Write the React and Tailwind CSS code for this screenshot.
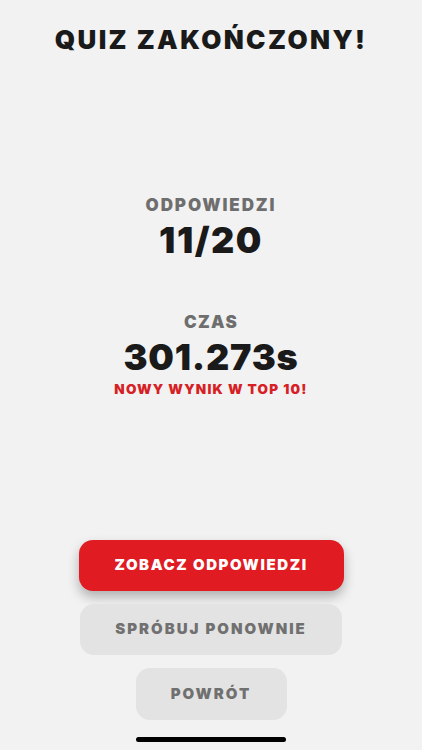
import React from "react";

export default function App() {
  const font = { fontFamily: "Inter, 'Liberation Sans', sans-serif" };
  return (
    <div
      className="w-[422px] h-[750px] bg-[#f2f2f2] flex flex-col items-center overflow-hidden"
      style={font}
    >
      <h1 className="mt-[22px] text-[26px] leading-[36px] font-black tracking-[2.4px] text-[#1a1a1a]">
        QUIZ ZAKOŃCZONY!
      </h1>

      <div className="mt-[136px] flex flex-col items-center">
        <div className="text-[17px] leading-[22px] font-black text-[#6e6e6e] tracking-[1.9px]">
          ODPOWIEDZI
        </div>
        <div className="mt-[3px] text-[36px] leading-[42px] font-black tracking-[1.5px] text-[#1a1a1a]">
          11/20
        </div>
      </div>

      <div className="mt-[50px] flex flex-col items-center">
        <div className="text-[17px] leading-[22px] font-black text-[#6e6e6e] tracking-[1.3px]">
          CZAS
        </div>
        <div className="mt-[3px] text-[36px] leading-[42px] font-black tracking-[0.8px] text-[#1a1a1a]">
          301.273s
        </div>
        <div className="mt-[2px] text-[13.5px] leading-[19px] font-black text-[#d71f26] tracking-[1.2px]">
          NOWY WYNIK W TOP 10!
        </div>
      </div>

      <div className="mt-auto flex flex-col items-center gap-[13px]">
        <button className="w-[265px] h-[51px] rounded-[14px] bg-[#e01b22] text-white text-[15px] font-black tracking-[1.6px] shadow-[0_6px_12px_rgba(0,0,0,0.28)]">
          ZOBACZ ODPOWIEDZI
        </button>
        <button className="w-[262px] h-[51px] rounded-[14px] bg-[#e3e3e3] text-[#707070] text-[15px] font-black tracking-[2px]">
          SPRÓBUJ PONOWNIE
        </button>
        <button className="w-[151px] h-[52px] rounded-[14px] bg-[#e3e3e3] text-[#707070] text-[15px] font-black tracking-[2px]">
          POWRÓT
        </button>
      </div>

      <div className="mt-[17px] mb-[8px] w-[150px] h-[5px] rounded-full bg-black" />
    </div>
  );
}
